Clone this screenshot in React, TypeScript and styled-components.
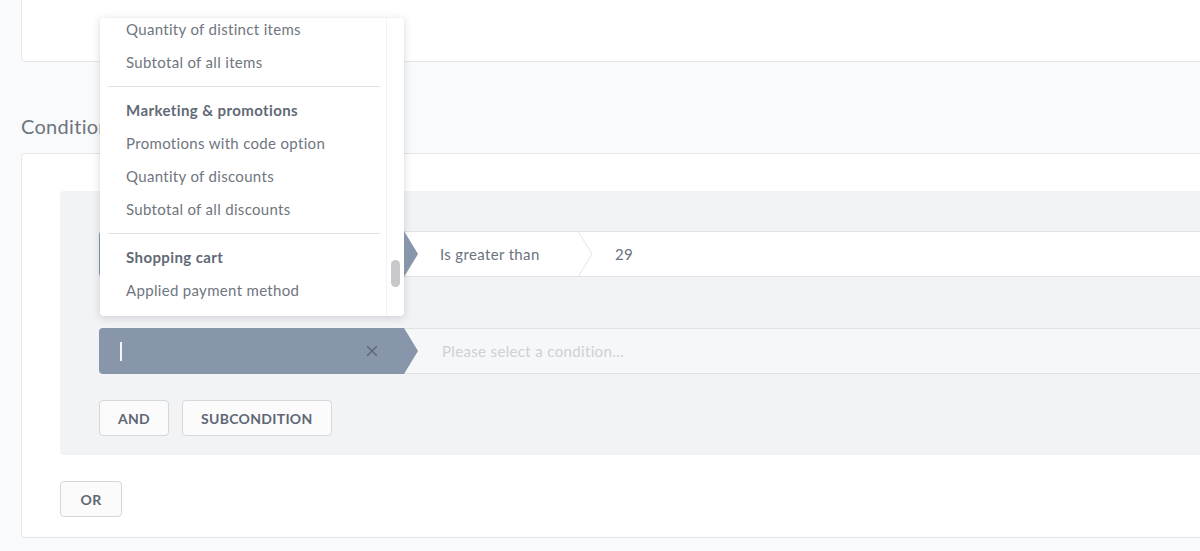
import React from "react";
import styled, { createGlobalStyle } from "styled-components";

const GlobalStyle = createGlobalStyle`
  html, body { margin: 0; padding: 0; background: #f9fafb; overflow: hidden; }
  body { font-family: "Lato", "Open Sans", sans-serif; -webkit-font-smoothing: antialiased; }
  * { box-sizing: border-box; }
`;

const Page = styled.div`
  position: relative;
  width: 1200px;
  height: 551px;
  overflow: hidden;
  padding-left: 21px;
`;

const TopCard = styled.div`
  margin-top: -10px;
  margin-right: -10px;
  height: 72px;
  background: #fff;
  border: 1px solid #e3e5e8;
  border-radius: 0 0 0 4px;
`;

const Heading = styled.h2`
  margin: 52px 0 15px;
  font-size: 20px;
  line-height: 24px;
  font-weight: 400;
  letter-spacing: 0.3px;
  color: #6d747e;
`;

const Card = styled.div`
  margin-right: -10px;
  background: #fff;
  border: 1px solid #e3e5e8;
  border-radius: 4px;
  padding: 37px 0 20px 38px;
`;

const Group = styled.div`
  display: flex;
  flex-direction: column;
  align-items: flex-start;
  background: #f2f3f5;
  border-radius: 4px;
  padding: 40px 0 19px 39px;
`;

const Rows = styled.div`
  align-self: stretch;
  display: flex;
  flex-direction: column;
  gap: 51px;
`;

const Row = styled.div`
  display: flex;
  height: 46px;
`;

const Field = styled.div`
  position: relative;
  flex: 0 0 305px;
  display: flex;
  align-items: center;
  padding: 0 20px 0 21px;
  background: #8796ab;
  border-radius: 4px 0 0 4px;
  color: #fff;
  font-size: 15px;

  &::after {
    content: "";
    position: absolute;
    right: -14px;
    top: 0;
    border-top: 23px solid transparent;
    border-bottom: 23px solid transparent;
    border-left: 14px solid #8796ab;
    z-index: 1;
  }
`;

const Cursor = styled.span`
  width: 2px;
  height: 19px;
  background: #fff;
  opacity: 0.9;
`;

const ClearIcon = styled.span`
  margin-left: auto;
  margin-right: 6px;
  display: flex;
  color: #5d697a;
`;

const Rest = styled.div<{ $empty?: boolean }>`
  flex: 1;
  display: flex;
  align-items: center;
  background: ${(p) => (p.$empty ? "#f6f7f9" : "#fff")};
  border-top: 1px solid #dfe2e6;
  border-bottom: 1px solid #dfe2e6;
  font-size: 15px;
  letter-spacing: 0.35px;
  color: #6b7280;
`;

const Operator = styled.div`
  flex: 0 0 173px;
  padding-left: 36px;
`;

const Value = styled.div`
  padding-left: 22px;
`;

const Placeholder = styled.div`
  padding-left: 38px;
  color: #cdd0d5;
`;

const Actions = styled.div`
  display: flex;
  gap: 13px;
  margin-top: 26px;
`;

const Button = styled.button`
  height: 36px;
  padding: 0 18px;
  background: #fbfbfc;
  border: 1px solid #d4d7dc;
  border-radius: 4px;
  font-family: "Lato", "Open Sans", sans-serif;
  font-size: 14px;
  font-weight: 700;
  letter-spacing: 0.3px;
  color: #5f6775;
  text-transform: uppercase;
`;

const OrButton = styled(Button)`
  margin-top: 26px;
  width: 62px;
  padding: 0;
`;

const Menu = styled.div`
  position: absolute;
  left: 100px;
  top: 18px;
  width: 304px;
  height: 298px;
  display: flex;
  background: #fff;
  border-radius: 3px;
  box-shadow: 0 2px 10px rgba(30, 40, 60, 0.16), 0 0 1px rgba(30, 40, 60, 0.12);
  overflow: hidden;
`;

const MenuList = styled.div`
  flex: 1;
  display: flex;
  flex-direction: column;
  margin-top: -5px;
`;

const MenuItem = styled.div<{ $header?: boolean }>`
  height: 33px;
  line-height: 33px;
  padding-left: 26px;
  font-size: 15px;
  letter-spacing: ${(p) => (p.$header ? "0.4px" : "0.32px")};
  font-weight: ${(p) => (p.$header ? 700 : 400)};
  color: ${(p) => (p.$header ? "#626975" : "#6f7680")};
  white-space: nowrap;
`;

const Divider = styled.hr`
  margin: 7px 6px 7px 8px;
  border: 0;
  border-top: 1px solid #dfe1e4;
  height: 0;
`;

const Track = styled.div`
  flex: 0 0 18px;
  position: relative;
  border-left: 1px solid #f1f2f3;
`;

const Thumb = styled.div`
  position: absolute;
  left: 4px;
  top: 242px;
  width: 9px;
  height: 27px;
  border-radius: 5px;
  background: #c7c8ca;
`;

const Chevron = () => (
  <svg width="16" height="46" viewBox="0 0 16 46" style={{ flex: "0 0 16px", display: "block", marginTop: -1, marginBottom: -1 }}>
    <path d="M1 0 L15 23 L1 46" fill="none" stroke="#e3e5e9" strokeWidth="1" />
  </svg>
);

const XIcon = () => (
  <svg width="12" height="12" viewBox="0 0 12 12">
    <path d="M1.5 1.5 L10.5 10.5 M10.5 1.5 L1.5 10.5" stroke="currentColor" strokeWidth="1.6" strokeLinecap="round" />
  </svg>
);

const groups: { header?: string; items: string[] }[] = [
  { items: ["Quantity of distinct items", "Subtotal of all items"] },
  { header: "Marketing & promotions", items: ["Promotions with code option", "Quantity of discounts", "Subtotal of all discounts"] },
  { header: "Shopping cart", items: ["Applied payment method"] },
];

export default function App() {
  return (
    <>
      <GlobalStyle />
      <Page>
        <TopCard />
        <Heading>Conditions</Heading>
        <Card>
          <Group>
            <Rows>
              <Row>
                <Field />
                <Rest>
                  <Operator>Is greater than</Operator>
                  <Chevron />
                  <Value>29</Value>
                </Rest>
              </Row>
              <Row>
                <Field>
                  <Cursor />
                  <ClearIcon>
                    <XIcon />
                  </ClearIcon>
                </Field>
                <Rest $empty>
                  <Placeholder>Please select a condition...</Placeholder>
                </Rest>
              </Row>
            </Rows>
            <Actions>
              <Button>And</Button>
              <Button>Subcondition</Button>
            </Actions>
          </Group>
          <OrButton>Or</OrButton>
        </Card>
        <Menu>
          <MenuList>
            {groups.map((g, i) => (
              <React.Fragment key={i}>
                {i > 0 && <Divider />}
                {g.header && <MenuItem $header>{g.header}</MenuItem>}
                {g.items.map((it) => (
                  <MenuItem key={it}>{it}</MenuItem>
                ))}
              </React.Fragment>
            ))}
          </MenuList>
          <Track>
            <Thumb />
          </Track>
        </Menu>
      </Page>
    </>
  );
}
